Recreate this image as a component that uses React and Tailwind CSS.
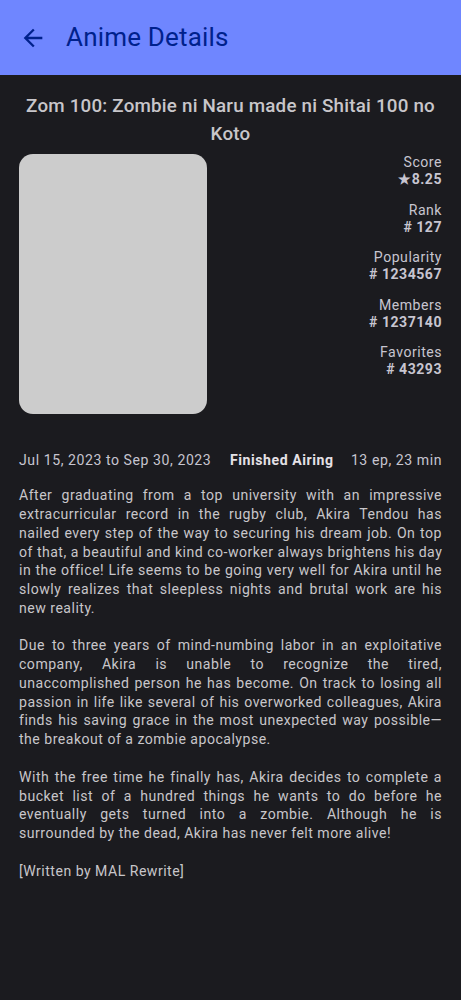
const stats = [
  ['Score', '★8.25'],
  ['Rank', '# 127'],
  ['Popularity', '# 1234567'],
  ['Members', '# 1237140'],
  ['Favorites', '# 43293'],
];

const synopsis = [
  ['After graduating from a top university with an impressive', 'extracurricular record in the rugby club, Akira Tendou has', 'nailed every step of the way to securing his dream job. On top', 'of that, a beautiful and kind co-worker always brightens his day', 'in the office! Life seems to be going very well for Akira until he', 'slowly realizes that sleepless nights and brutal work are his', 'new reality.'],
  ['Due to three years of mind-numbing labor in an exploitative', 'company, Akira is unable to recognize the tired,', 'unaccomplished person he has become. On track to losing all', 'passion in life like several of his overworked colleagues, Akira', 'finds his saving grace in the most unexpected way possible—', 'the breakout of a zombie apocalypse.'],
  ['With the free time he finally has, Akira decides to complete a', 'bucket list of a hundred things he wants to do before he', 'eventually gets turned into a zombie. Although he is', 'surrounded by the dead, Akira has never felt more alive!'],
  ['[Written by MAL Rewrite]'],
];

export default function App() {
  return (
    <div className="h-[1000px] w-[461px] overflow-hidden bg-[#1b1b1f] font-['Roboto',sans-serif] text-[#c8c6ca]">
      <header className="flex h-[75px] items-center bg-[#6f86ff] pl-[19px] text-[#00218c]">
        <svg className="size-7" viewBox="0 0 24 24" fill="currentColor">
          <path d="M20 11H7.83l5.59-5.59L12 4l-8 8 8 8 1.41-1.41L7.83 13H20v-2z" />
        </svg>
        <h1 className="ml-[19px] text-[26px] tracking-[0.18px]">Anime Details</h1>
      </header>
      <main className="px-[19px] pt-[17px]">
        <h2 className="text-center text-[18.77px] leading-[28px] font-medium tracking-[0.21px]">
          Zom 100: Zombie ni Naru made ni Shitai 100 no
          <br />
          Koto
        </h2>
        <div className="mt-[6px] flex justify-between">
          <div className="h-[259.5px] w-[188px] rounded-[14px] bg-[#cccccc]" />
          <dl className="flex flex-col gap-[14px] pt-[0.3px] text-right text-[14.08px] leading-[16.75px] tracking-[0.51px] text-[#c7c5d0]">
            {stats.map(([label, value]) => (
              <div key={label}>
                <dt>{label}</dt>
                <dd className="font-bold">{value}</dd>
              </div>
            ))}
          </dl>
        </div>
        <div className="mt-[37.5px] flex h-[19px] items-center justify-between text-[14.08px] tracking-[0.56px] whitespace-nowrap text-[#c7c5d0]">
          <span>Jul 15, 2023 to Sep 30, 2023</span>
          <strong className="translate-x-[0.7px] text-[#e5e1e6]">Finished Airing</strong>
          <span>13 ep, 23 min</span>
        </div>
        <div className="mt-[16.3px] flex flex-col gap-[18.77px] text-[14.08px] leading-[18.77px] tracking-[0.49px]">
          {synopsis.map((lines) => (
            <p key={lines[0]}>
              {lines.map((line, i) => (
                <span
                  key={line}
                  className={i < lines.length - 1 ? 'block whitespace-nowrap [text-align-last:justify]' : 'block whitespace-nowrap'}
                >
                  {line}
                </span>
              ))}
            </p>
          ))}
        </div>
      </main>
    </div>
  );
}
